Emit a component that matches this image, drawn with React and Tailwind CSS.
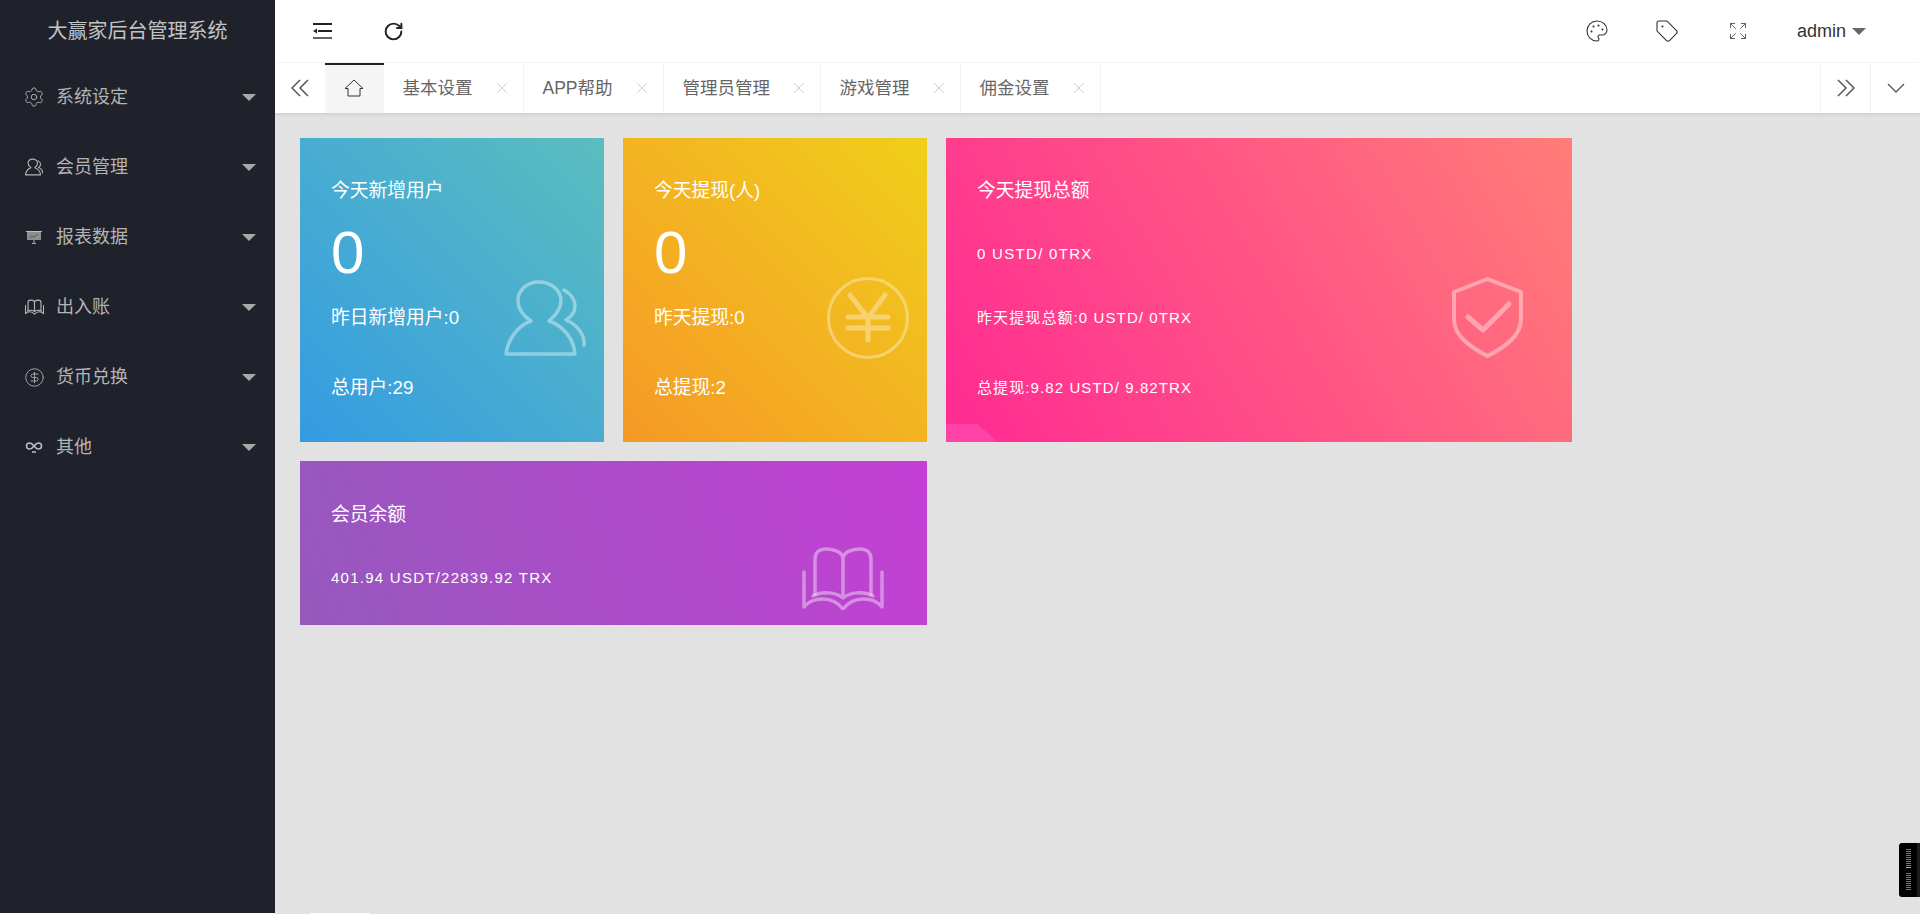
import { Settings, CircleDollarSign, RotateCw, Palette, Tag, Expand } from "lucide-react";

const font = "font-['Liberation_Sans','Noto_Sans_CJK_SC',sans-serif]";

const UsersIcon = ({ className, sw = 3.5 }) => (
  <svg viewBox="0 0 82 76" fill="none" stroke="currentColor" strokeWidth={sw} strokeLinecap="round" strokeLinejoin="round" className={className}>
    <path d="M27 41C18 35 14 28 14 21C14 10 23 2 35 2C47 2 57 10 57 21C57 28 52 35 45 41C60 46 70 60 71 74L2 74C4 60 13 46 27 41Z" />
    <path d="M60 10C67 14 71 20 71 26C71 32 67 37 62 40C72 44 81 54 80 65" />
  </svg>
);

const BookIcon = ({ className, sw = 3.5 }) => (
  <svg viewBox="0 0 82 63" fill="none" stroke="currentColor" strokeWidth={sw} strokeLinecap="round" strokeLinejoin="round" className={className}>
    <path d="M13 47V12C13 5 18 2 24 2C32 2 41 5 41 12V47M41 12C41 5 50 2 58 2C64 2 69 5 69 12V47" />
    <path d="M11 49C20 44 34 45 41 51C48 45 62 44 71 49" />
    <path d="M2 25V60C10 50 30 48 41 62C52 48 72 50 80 60V25" />
  </svg>
);

const BoardIcon = () => (
  <svg viewBox="0 0 18 18" className="w-[18px] h-[18px]" fill="none">
    <rect x="2" y="4" width="14" height="8" fill="#8e8e8e" />
    <rect x="1" y="3" width="16" height="1" fill="#bdbdbd" />
    <path d="M9 12V15.5M7 15.5H11" stroke="#a8a8a8" />
    <path d="M4 10L7 8L9 9L13 6" stroke="#4a4a4a" strokeWidth="0.8" />
  </svg>
);

const LoopIcon = () => (
  <svg viewBox="0 0 18 18" className="w-[18px] h-[18px]" fill="none" stroke="#b8c0c8" strokeWidth="1.5">
    <path d="M9 8C7.5 6 6 5 4.5 5C2.8 5 1.5 6.3 1.5 8C1.5 9.7 2.8 11 4.5 11C6 11 7.5 10 9 8C10.5 6 12 5 13.5 5C15.2 5 16.5 6.3 16.5 8C16.5 9.7 15.2 11 13.5 11C12 11 10.5 10 9 8Z" />
    <path d="M7 14H11" />
  </svg>
);

const menus = [
  { label: "系统设定", icon: <Settings size={22} strokeWidth={1} className="-ml-[2px]" /> },
  { label: "会员管理", icon: <UsersIcon className="w-[18px] h-[18px]" sw={5} /> },
  { label: "报表数据", icon: <BoardIcon /> },
  { label: "出入账", icon: <BookIcon className="w-[19px] h-[16px]" sw={5} /> },
  { label: "货币兑换", icon: <CircleDollarSign size={21} strokeWidth={1} className="-ml-[1.5px]" /> },
  { label: "其他", icon: <LoopIcon /> },
];

const tabs = [
  { label: "基本设置", w: "w-[140px]" },
  { label: "APP帮助", w: "w-[140px]" },
  { label: "管理员管理", w: "w-[157px]" },
  { label: "游戏管理", w: "w-[140px]" },
  { label: "佣金设置", w: "w-[140px]" },
];

const Sidebar = () => (
  <aside className="w-[275px] shrink-0 bg-[#1f222b]">
    <div className="h-[62px] flex items-center justify-center text-[20px] text-[#c4c4c4]">大赢家后台管理系统</div>
    {menus.map((m) => (
      <div key={m.label} className="h-[70px] flex items-center pl-[25px] pr-[19px] text-[18px] text-[#b4b4b4]">
        <span className="w-[31px] flex items-center">{m.icon}</span>
        <span className="flex-1">{m.label}</span>
        <span className="w-0 h-0 border-x-[7.5px] border-x-transparent border-t-[7.5px] border-t-[#a9a9a9]" />
      </div>
    ))}
  </aside>
);

const Header = () => (
  <header className="h-[63px] bg-white border-b border-[#f4f4f4] flex items-center shrink-0">
    <svg viewBox="0 0 19 16" className="w-[19px] h-[16px] ml-[38px] text-[#222]" fill="currentColor">
      <rect x="0" y="0" width="19" height="2" />
      <rect x="5" y="7" width="14" height="2" />
      <path d="M0 8L4 5.5V10.5Z" />
      <rect x="0" y="14" width="19" height="2" opacity="0.7" />
    </svg>
    <RotateCw size={21} strokeWidth={2.25} className="ml-[51px] text-[#222]" />
    <div className="ml-auto flex items-center text-[#333]">
      <Palette size={24} strokeWidth={1.1} />
      <Tag size={24} strokeWidth={1.1} className="ml-[46px]" />
      <Expand size={20} strokeWidth={1.1} className="ml-[49px] text-[#555]" />
      <span className="ml-[49px] text-[18px]">admin</span>
      <span className="ml-[6px] w-0 h-0 border-x-[7.5px] border-x-transparent border-t-[7.5px] border-t-[#666]" />
      <span className="w-[54px]" />
    </div>
  </header>
);

const Close = () => (
  <svg viewBox="0 0 10 10" className="w-[10px] h-[10px] absolute right-[16px] top-[20px]" stroke="#cfcfcf" strokeWidth="1">
    <path d="M0 0L10 10M10 0L0 10" />
  </svg>
);

const Tabs = () => (
  <div className="h-[50px] bg-white flex shrink-0 shadow-[0_2px_3px_rgba(0,0,0,0.08)] text-[17.5px] text-[#666] relative">
    <div className="w-[50px] flex items-center justify-center">
      <svg viewBox="0 0 18 18" className="w-[18px] h-[18px]" fill="none" stroke="#555" strokeWidth="1.5">
        <path d="M9 1L1 9L9 17M17 1L9 9L17 17" />
      </svg>
    </div>
    <div className="w-[59px] bg-[#f5f5f5] border-t-2 border-[#1f222b] flex items-center justify-center pr-[2px] pb-[3px]">
      <svg viewBox="0 0 20 18" className="w-[20px] h-[18px]" fill="none" stroke="#333" strokeWidth="1">
        <path d="M1 9.5L10 1L19 9.5H16V17H4V9.5Z" />
      </svg>
    </div>
    {tabs.map((t) => (
      <div key={t.label} className={`${t.w} relative flex items-center pl-[18.5px] border-r border-[#f2f2f2]`}>
        {t.label}
        <Close />
      </div>
    ))}
    <div className="w-[50px] ml-auto flex items-center justify-center border-l border-[#f2f2f2]">
      <svg viewBox="0 0 18 18" className="w-[18px] h-[18px]" fill="none" stroke="#555" strokeWidth="1.5">
        <path d="M9 1L17 9L9 17M1 1L9 9L1 17" />
      </svg>
    </div>
    <div className="w-[50px] flex items-center justify-center border-l border-[#f2f2f2]">
      <svg viewBox="0 0 18 10" className="w-[18px] h-[10px]" fill="none" stroke="#555" strokeWidth="1.25">
        <path d="M1 1L9 9L17 1" />
      </svg>
    </div>
  </div>
);

const Card = ({ bg, title, big, second, third, icon, small, children }) => (
  <div className={`relative overflow-hidden h-[304px] pl-[31px] pt-[38px] text-white ${bg}`}>
    <div className="h-[30px] leading-[30px] text-[18.75px]">{title}</div>
    {big ? (
      <div className="h-[60px] leading-[60px] mt-[17px] text-[60px]">{big}</div>
    ) : (
      <div className="h-[30px] leading-[30px] mt-[33px] text-[15px] tracking-[1.3px]">{small}</div>
    )}
    <div className={`h-[30px] leading-[30px] ${big ? "mt-[20px] text-[18.75px]" : "mt-[34px] text-[15px] tracking-[1.1px]"}`}>{second}</div>
    <div className={`h-[30px] leading-[30px] mt-[40px] ${big ? "text-[18.75px]" : "text-[15px] tracking-[1.1px]"}`}>{third}</div>
    {icon}
    {children}
  </div>
);

const Ticks = ({ n }) => (
  <div className="flex flex-col gap-px">
    {Array.from({ length: n }).map((_, i) => (
      <span key={i} className="block w-[5px] h-px bg-[#777]" />
    ))}
  </div>
);

export default function App() {
  return (
    <div className={`relative h-[914px] w-[1920px] overflow-hidden flex bg-[#e2e2e2] ${font}`}>
      <Sidebar />
      <div className="flex-1 flex flex-col min-w-0">
        <Header />
        <Tabs />
        <main className="grid grid-cols-[304px_304px_626px] gap-[19px] pl-[25px] pt-[25px] content-start">
          <Card
            bg="bg-linear-45 from-[#349be2] to-[#5cbdbd]"
            title="今天新增用户"
            big="0"
            second="昨日新增用户:0"
            third="总用户:29"
            icon={<UsersIcon className="absolute left-[204px] top-[142px] w-[82px] h-[76px] text-white/40" />}
          />
          <Card
            bg="bg-linear-45 from-[#f59826] to-[#efcf19]"
            title="今天提现(人)"
            big="0"
            second="昨天提现:0"
            third="总提现:2"
            icon={
              <svg viewBox="0 0 82 82" fill="none" stroke="currentColor" strokeLinecap="round" className="absolute left-[204px] top-[139px] w-[82px] h-[82px] text-white/35">
                <circle cx="41" cy="41" r="39.5" strokeWidth="3" />
                <path d="M23 18L41 41L58 18M41 41V63M21 40H61M21 51H61" strokeWidth="5" />
              </svg>
            }
          />
          <Card
            bg="bg-linear-[60deg] from-[#ff2a93] to-[#ff7d78]"
            title="今天提现总额"
            small="0 USTD/ 0TRX"
            second="昨天提现总额:0 USTD/ 0TRX"
            third="总提现:9.82 USTD/ 9.82TRX"
            icon={
              <svg viewBox="0 0 71 81" fill="none" stroke="currentColor" strokeLinecap="round" strokeLinejoin="round" className="absolute right-[49px] top-[139px] w-[71px] h-[81px] text-white/40">
                <path d="M35.5 2L69 15V42C69 58 55 69 35.5 79C16 69 2 58 2 42V15Z" strokeWidth="4" />
                <path d="M16 40L31 53L57 27" strokeWidth="5" />
              </svg>
            }
          >
            <div className="absolute left-0 bottom-0 w-[52px] h-[18px] bg-[#ff4db0]/70 [clip-path:polygon(0_0,60%_0,100%_100%,0_100%)]" />
          </Card>
          <div className="col-span-2 relative h-[164px] pl-[31px] pt-[39px] text-white bg-linear-[70deg] from-[#9559bd] to-[#c43fd4]">
            <div className="h-[30px] leading-[30px] text-[18.75px]">会员余额</div>
            <div className="h-[30px] leading-[30px] mt-[33px] text-[15px] tracking-[1.25px]">401.94 USDT/22839.92 TRX</div>
            <BookIcon className="absolute left-[502px] top-[86px] w-[82px] h-[63px] text-white/40" />
          </div>
        </main>
      </div>
      <div className="absolute left-[1899px] top-[843px] w-[21px] h-[54px] bg-black rounded-l-[3px] pl-[7px] pt-[6px]">
        <Ticks n={9} />
        <span className="block w-[5px] h-px bg-[#e8a33d] mt-px" />
        <div className="mt-[5px]"><Ticks n={9} /></div>
        <span className="absolute right-0 top-0 bottom-0 w-[3px] bg-[#1c1c1c]" />
      </div>
      {/* page edge showing below the panels */}
      <div className="absolute left-0 bottom-0 w-[275px] h-px bg-white" />
      <div className="absolute left-[310px] bottom-0 w-[60px] h-px bg-white" />
    </div>
  );
}
